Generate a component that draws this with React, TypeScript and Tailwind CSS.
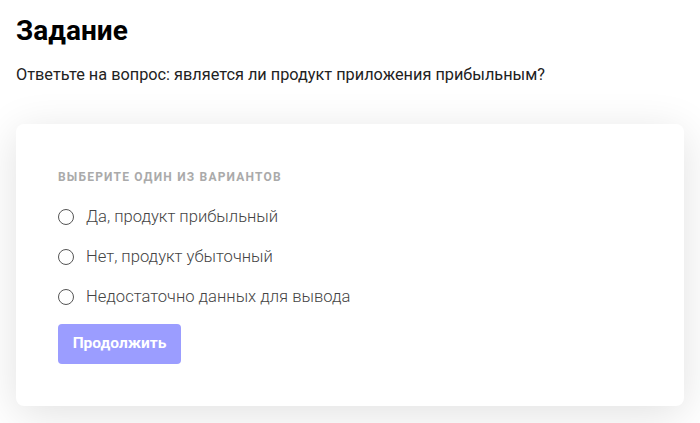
import React from 'react';

const options = [
  'Да, продукт прибыльный',
  'Нет, продукт убыточный',
  'Недостаточно данных для вывода',
];

const App: React.FC = () => {
  return (
    <div className="min-h-[423px] bg-white px-4 pt-[14px] font-['Roboto',sans-serif]">
      <h1 className="text-[28px] font-bold leading-[34px] text-black">Задание</h1>
      <p className="mt-[16px] text-[16.3px] leading-[22px] text-[#222]">
        Ответьте на вопрос: является ли продукт приложения прибыльным?
      </p>

      <div className="mt-[38px] w-[668px] rounded-lg bg-white px-[42px] pt-[45px] pb-[42px] shadow-[0_8px_44px_rgba(0,0,0,0.12)]">
        <div className="text-[12px] font-bold uppercase leading-[16px] tracking-[0.1em] text-[#aaaaaa]">
          Выберите один из вариантов
        </div>

        <div className="mt-[23px] flex flex-col gap-[22px]">
          {options.map((opt) => (
            <label key={opt} className="flex items-center gap-[12px]">
              <span className="h-[16px] w-[16px] rounded-full border border-[#555]" />
              <span className="text-[16.6px] font-light leading-[18px] text-[#444]">{opt}</span>
            </label>
          ))}
        </div>

        <button className="mt-[18px] h-[40px] w-[123px] rounded-[4px] bg-[#9b9dff] text-[15.5px] font-bold text-white">
          Продолжить
        </button>
      </div>
    </div>
  );
};

export default App;
